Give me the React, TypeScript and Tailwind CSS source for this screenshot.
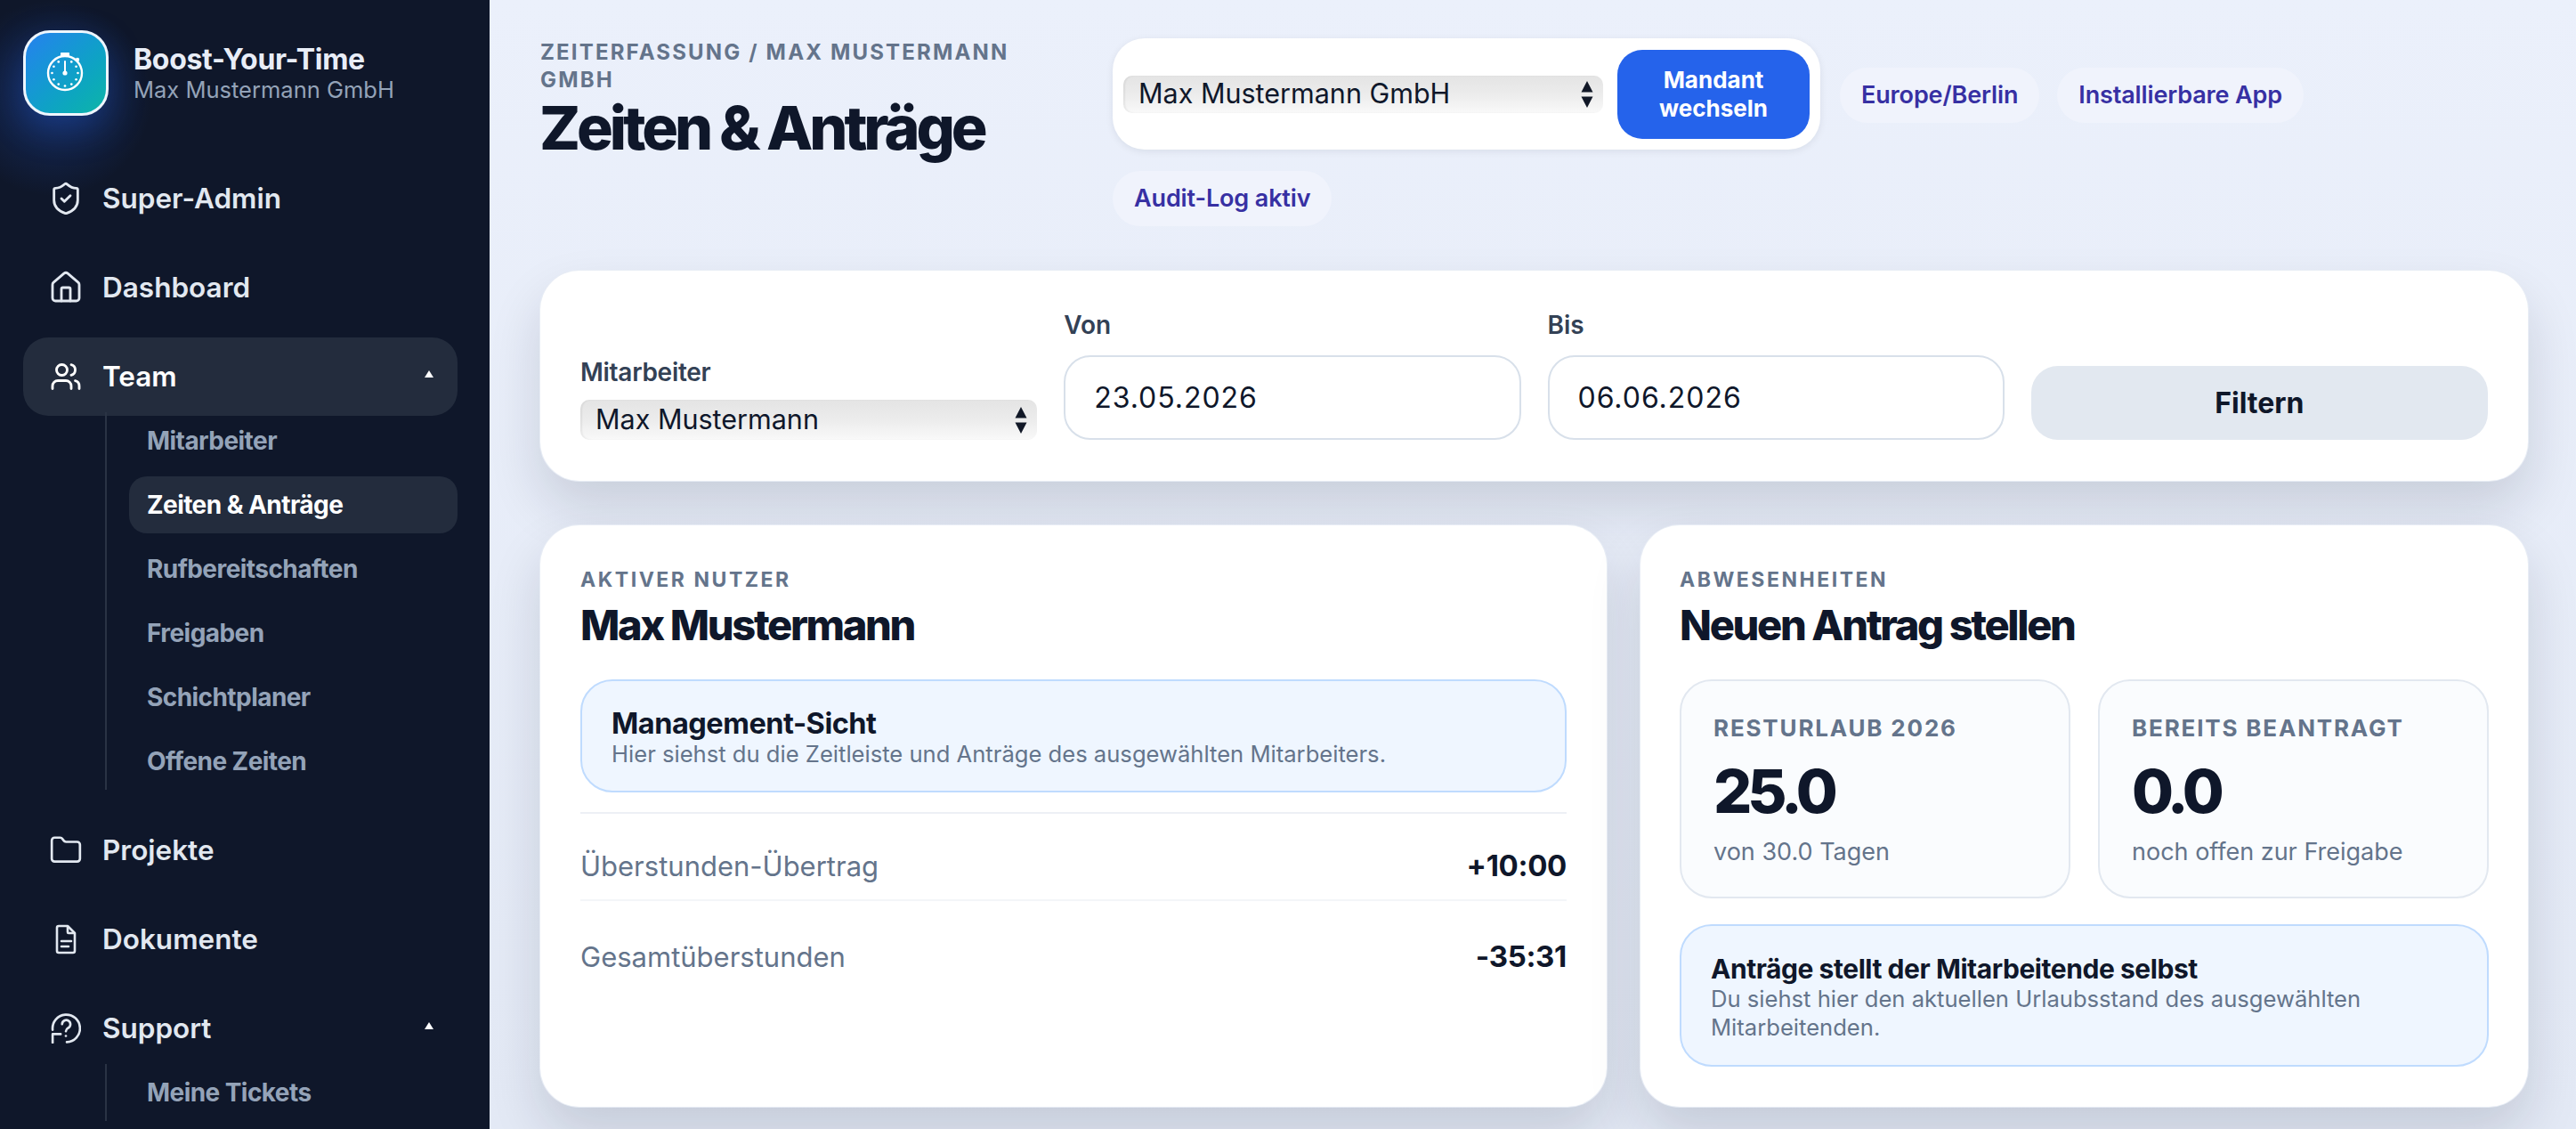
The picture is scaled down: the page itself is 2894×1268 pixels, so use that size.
import { Folder, House, ShieldCheck, Users } from "lucide-react";
import type { ReactNode } from "react";

const font = { fontFamily: "Inter, 'Noto Sans', sans-serif" };

const teamLinks = ["Mitarbeiter", "Zeiten & Anträge", "Rufbereitschaften", "Freigaben", "Schichtplaner", "Offene Zeiten"];

function Stopwatch() {
  const dots = Array.from({ length: 12 }, (_, i) => (i * Math.PI) / 6);
  return (
    <svg viewBox="0 0 96 96" className="h-full w-full" fill="none" stroke="#fff">
      <rect x="42" y="25" width="10" height="4.5" rx="0.8" fill="#fff" stroke="none" />
      <circle cx="47" cy="48" r="19" strokeWidth="2.4" />
      <circle cx="61" cy="33" r="2.2" fill="#fff" stroke="none" />
      {dots.slice(1).map((a) => (
        <circle key={a} cx={47 + Math.sin(a) * 14.5} cy={48 - Math.cos(a) * 14.5} r="1.35" fill="#fff" stroke="none" />
      ))}
      <path d="M47 35v12" strokeWidth="2" strokeLinecap="round" />
      <circle cx="47" cy="48" r="2.6" fill="#fff" stroke="none" />
    </svg>
  );
}

function DocIcon() {
  return (
    <svg viewBox="0 0 24 34" width="24" height="34" className="shrink-0" fill="none" stroke="currentColor" strokeWidth="2.6" strokeLinejoin="round" strokeLinecap="round">
      <path d="M2 4a2 2 0 0 1 2-2h10l8 8v20a2 2 0 0 1-2 2H4a2 2 0 0 1-2-2z" />
      <path d="M14 3v6a1 1 0 0 0 1 1h6" />
      <path d="M7 19h11M7 25h8" />
    </svg>
  );
}

function SupportIcon() {
  return (
    <svg viewBox="0 0 32 32" width="34" height="34" className="shrink-0" fill="none" stroke="currentColor" strokeWidth="2.5" strokeLinecap="round" strokeLinejoin="round">
      <path d="M2 17.5A14.5 14.5 0 1 1 17 30.5" />
      <path d="M2 31v-9h8.5" />
      <path d="M12 11.5a4.4 4.4 0 1 1 6.5 4c-1.6 1-2.5 2-2.5 3.5" />
      <path d="M16 24h.01" />
    </svg>
  );
}

function NavRow({ icon, label, active, caret }: { icon: ReactNode; label: string; active?: boolean; caret?: boolean }) {
  return (
    <div className={`flex h-[88px] items-center rounded-[28px] pl-[32px] pr-[27px] ${active ? "bg-[#232c3d] text-white" : "text-[#e2e8f0]"}`}>
      <span className="flex w-[32px] justify-center">{icon}</span>
      <span className="ml-[25px] flex-1 text-[31.5px] font-semibold leading-none">{label}</span>
      {caret ? <span className="mb-[6px] h-0 w-0 border-x-[5px] border-b-[8px] border-x-transparent border-b-white" /> : null}
    </div>
  );
}

function SubNav({ links, activeLink }: { links: string[]; activeLink?: string }) {
  return (
    <div className="ml-[92px] mt-[-4px] border-l-2 border-[#2a3344] pl-[25px]">
      <div className="flex flex-col gap-[8px]">
        {links.map((link) => (
          <div
            key={link}
            className={`flex h-[64px] items-center rounded-[20px] pl-[20px] text-[28px] font-bold tracking-[-0.02em] ${
              link === activeLink ? "bg-[#232c3d] text-white" : "text-[#94a3b8]"
            }`}
          >
            {link}
          </div>
        ))}
      </div>
    </div>
  );
}

function Sidebar() {
  return (
    <aside className="h-full w-[550px] shrink-0 overflow-hidden bg-[#0f172a] bg-[radial-gradient(circle_at_60px_110px,rgba(37,99,235,0.28),transparent_110px)] pl-[26px] pr-[36px]">
      <div className="flex items-center pt-[34px]">
        <div className="h-[96px] w-[96px] shrink-0 overflow-hidden rounded-[30px] border-[3px] border-[#eef6ff] bg-gradient-to-br from-[#2680ee] to-[#10b5a6] shadow-[0_14px_40px_rgba(37,99,235,0.3)]">
          <div className="ml-[-3px] mt-[-3px] h-[96px] w-[96px]">
            <Stopwatch />
          </div>
        </div>
        <div className="ml-[28px]">
          <div className="text-[32px] font-bold leading-[38px] tracking-[-0.01em] text-[#e8edf7]">Boost-Your-Time</div>
          <div className="text-[25.5px] leading-[30px] text-[#94a3b8]">Max Mustermann GmbH</div>
        </div>
      </div>
      <nav className="mt-[49px] flex flex-col gap-[12px]">
        <NavRow icon={<ShieldCheck size={40} strokeWidth={1.7} className="shrink-0" />} label="Super-Admin" />
        <NavRow icon={<House size={40} strokeWidth={1.7} className="shrink-0" />} label="Dashboard" />
        <div>
          <NavRow icon={<Users size={36} strokeWidth={1.9} className="shrink-0" />} label="Team" active caret />
          <SubNav links={teamLinks} activeLink="Zeiten & Anträge" />
        </div>
        <div className="mt-[12px]">
          <NavRow icon={<Folder size={38} strokeWidth={1.7} className="shrink-0" />} label="Projekte" />
        </div>
        <NavRow icon={<DocIcon />} label="Dokumente" />
        <div>
          <NavRow icon={<SupportIcon />} label="Support" caret />
          <SubNav links={["Meine Tickets"]} />
        </div>
      </nav>
    </aside>
  );
}

function Updown() {
  return (
    <svg viewBox="0 0 14 30" width="14" height="30" className="pointer-events-none absolute right-[11px] top-1/2 -translate-y-1/2" fill="#111827">
      <path d="M7 0l6.5 12.5H.5zM7 30L.5 17.5h13z" />
    </svg>
  );
}

function NativeSelect({ value, className }: { value: string; className: string }) {
  return (
    <div className={`relative rounded-[10px] bg-gradient-to-b from-[#e4e4e4] via-[#ececec] to-[#f9f9f9] shadow-[inset_2px_0_2px_rgba(0,0,0,0.06)] ${className}`}>
      <select defaultValue={value} className="h-full w-full appearance-none bg-transparent pl-[17px] pr-[32px] text-[30.5px] leading-none text-[#0f172a] outline-none">
        <option>{value}</option>
      </select>
      <Updown />
    </div>
  );
}

function Pill({ children }: { children: ReactNode }) {
  return (
    <span className="flex h-[62px] items-center rounded-full bg-[#f0f3fc] px-[24px] text-[27px] font-semibold tracking-[-0.005em] text-[#3730a3]">{children}</span>
  );
}

function Header() {
  return (
    <header className="flex">
      <div className="w-[643px] shrink-0 pr-[90px]">
        <div className="text-[24px] font-bold uppercase leading-[31px] tracking-[0.09em] text-[#64748b]">Zeiterfassung / Max Mustermann GmbH</div>
        <h1 className="ml-[-1px] text-[68px] font-extrabold leading-[76px] tracking-[-0.06em] text-[#0f172a]">Zeiten &amp; Anträge</h1>
      </div>
      <div className="flex flex-1 flex-wrap content-start gap-x-[22px] gap-y-[24px]">
        <div className="flex h-[125px] w-[795px] items-center gap-[16px] rounded-[36px] bg-white pl-[12px] pr-[12px] shadow-[0_2px_8px_rgba(15,23,42,0.08)]">
          <NativeSelect value="Max Mustermann GmbH" className="h-[42px] flex-1" />
          <button className="h-[100px] w-[216px] shrink-0 rounded-[28px] bg-[#2563eb] text-[26px] font-bold leading-[32px] text-white">
            Mandant
            <br />
            wechseln
          </button>
        </div>
        <div className="mt-[33px] flex gap-x-[20px]">
          <Pill>Europe/Berlin</Pill>
          <Pill>Installierbare App</Pill>
        </div>
        <Pill>Audit-Log aktiv</Pill>
      </div>
    </header>
  );
}

function Field({ label, value }: { label: string; value: string }) {
  return (
    <label className="block">
      <span className="block text-[28px] font-semibold leading-[34px] text-[#334155]">{label}</span>
      <input
        defaultValue={value}
        className="mt-[17px] h-[95px] w-full rounded-[30px] border-2 border-[#d8e0ea] bg-white px-[32px] text-[32px] tracking-[0.03em] text-[#0f172a] outline-none"
      />
    </label>
  );
}

const cardClass = "rounded-[44px] bg-white shadow-[0_30px_60px_rgba(15,23,42,0.14)] ring-1 ring-[#e8edf5]";

function FilterCard() {
  return (
    <section className={`${cardClass} mt-[50px] grid h-[236px] grid-cols-4 items-end gap-[30px] px-[45px] pb-[46px]`}>
      <label className="block">
        <span className="block text-[28px] font-semibold leading-[34px] tracking-[-0.01em] text-[#334155]">Mitarbeiter</span>
        <NativeSelect value="Max Mustermann" className="mt-[14px] h-[45px]" />
      </label>
      <Field label="Von" value="23.05.2026" />
      <Field label="Bis" value="06.06.2026" />
      <button className="h-[83px] rounded-[30px] bg-[#e2e8f0] text-[32px] font-bold text-[#0f172a]">Filtern</button>
    </section>
  );
}

function Kicker({ children }: { children: ReactNode }) {
  return <div className="text-[23px] font-bold uppercase leading-[34px] tracking-[0.11em] text-[#64748b]">{children}</div>;
}

function CardTitle({ children }: { children: ReactNode }) {
  return <h2 className="mt-[7px] text-[47px] font-extrabold leading-[54px] tracking-[-0.05em] text-[#0f172a]">{children}</h2>;
}

function InfoBox({ title, text, className, titleClass }: { title: string; text: string; className: string; titleClass: string }) {
  return (
    <div className={`rounded-[36px] border-2 border-[#bfdbfe] bg-[#eff6ff] ${className}`}>
      <div className={`font-bold leading-[36px] tracking-[-0.015em] text-[#0f172a] ${titleClass}`}>{title}</div>
      <div className="text-[25.6px] leading-[32px] text-[#64748b]">{text}</div>
    </div>
  );
}

function ActiveUserCard() {
  return (
    <section className={`${cardClass} h-[653px] px-[45px] pt-[44px]`}>
      <Kicker>Aktiver Nutzer</Kicker>
      <CardTitle>Max Mustermann</CardTitle>
      <InfoBox
        title="Management-Sicht"
        text="Hier siehst du die Zeitleiste und Anträge des ausgewählten Mitarbeiters."
        className="mt-[34px] h-[127px] pl-[33px] pt-[30px]"
        titleClass="text-[32.5px]"
      />
      <div className="mt-[22px] flex h-[98px] items-center justify-between border-t-2 border-[#edf0f5] pt-[22px]">
        <span className="text-[31px] text-[#64748b]">Überstunden-Übertrag</span>
        <span className="text-[33px] font-bold tracking-[-0.01em] text-[#0f172a]">+10:00</span>
      </div>
      <div className="flex h-[106px] items-center justify-between border-t-2 border-[#f3f5f8] pt-[22px]">
        <span className="text-[31px] text-[#64748b]">Gesamtüberstunden</span>
        <span className="text-[33px] font-bold tracking-[-0.01em] text-[#0f172a]">-35:31</span>
      </div>
    </section>
  );
}

function Stat({ label, value, note }: { label: string; value: string; note: string }) {
  return (
    <div className="h-[246px] rounded-[36px] border-2 border-[#e2e8f0] bg-[#fafcfe] px-[36px] pt-[36px]">
      <div className="text-[26px] font-bold uppercase leading-[34px] tracking-[0.07em] text-[#64748b]">{label}</div>
      <div className="mt-[18px] text-[68px] font-extrabold leading-[70px] tracking-[-0.075em] text-[#0f172a]">{value}</div>
      <div className="mt-[16px] text-[27px] leading-[36px] text-[#64748b]">{note}</div>
    </div>
  );
}

function AbsenceCard() {
  return (
    <section className={`${cardClass} h-[653px] px-[44px] pt-[44px]`}>
      <Kicker>Abwesenheiten</Kicker>
      <CardTitle>Neuen Antrag stellen</CardTitle>
      <div className="mt-[34px] grid grid-cols-2 gap-[31px]">
        <Stat label="Resturlaub 2026" value="25.0" note="von 30.0 Tagen" />
        <Stat label="Bereits beantragt" value="0.0" note="noch offen zur Freigabe" />
      </div>
      <InfoBox
        title="Anträge stellt der Mitarbeitende selbst"
        text="Du siehst hier den aktuellen Urlaubsstand des ausgewählten Mitarbeitenden."
        className="mt-[29px] h-[160px] pl-[33px] pr-[30px] pt-[30px]"
        titleClass="text-[30px]"
      />
    </section>
  );
}

export default function App() {
  return (
    <div style={font} className="flex h-screen overflow-hidden bg-[#e9eefa]">
      <Sidebar />
      <main className="min-w-0 flex-1 bg-gradient-to-b from-[#ebf0fb] to-[#e3e9f5] pl-[57px] pr-[54px] pt-[43px]">
        <Header />
        <FilterCard />
        <div className="mt-[50px] grid grid-cols-[1198px_1fr] gap-[38px]">
          <ActiveUserCard />
          <AbsenceCard />
        </div>
      </main>
    </div>
  );
}
